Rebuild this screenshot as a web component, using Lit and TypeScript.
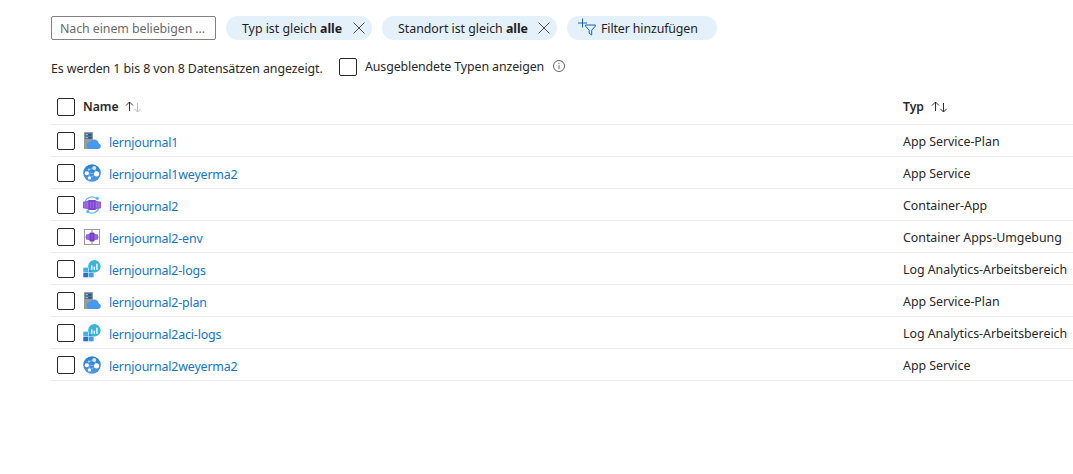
import { LitElement, html, svg, css } from "lit";
import { customElement, property } from "lit/decorators.js";

type Kind = "plan" | "web" | "container" | "env" | "logs";

interface Resource {
  name: string;
  type: string;
  kind: Kind;
}

const resources: Resource[] = [
  { name: "lernjournal1", type: "App Service-Plan", kind: "plan" },
  { name: "lernjournal1weyerma2", type: "App Service", kind: "web" },
  { name: "lernjournal2", type: "Container-App", kind: "container" },
  { name: "lernjournal2-env", type: "Container Apps-Umgebung", kind: "env" },
  { name: "lernjournal2-logs", type: "Log Analytics-Arbeitsbereich", kind: "logs" },
  { name: "lernjournal2-plan", type: "App Service-Plan", kind: "plan" },
  { name: "lernjournal2aci-logs", type: "Log Analytics-Arbeitsbereich", kind: "logs" },
  { name: "lernjournal2weyerma2", type: "App Service", kind: "web" },
];

const glyphs = {
  plan: svg`
    <path d="M1.8 0h7.4a.8.8 0 0 1 .8.8V17H1V.8a.8.8 0 0 1 .8-.8z" fill="#97999d"/>
    <path d="M2.3 1.6h6.6v2.2H2.3zM2.3 4.6h6.6v2.2H2.3z" fill="#1c5a8c"/>
    <path d="M2.9 2.1h1.8v1.2H2.9zM2.9 5.1h1.8v1.2H2.9z" fill="#7fd4f5"/>
    <path d="M7.3 17.1a3.4 3.4 0 0 1-.3-6.8 4.5 4.5 0 0 1 8.6 1 2.95 2.95 0 0 1-.4 5.8z" fill="#4499ec"/>`,
  web: svg`
    <defs><linearGradient id="w" x1="0" y1="0" x2="0" y2="1"><stop stop-color="#2a7fd0"/><stop offset="1" stop-color="#4d9ae6"/></linearGradient></defs>
    <circle cx="9" cy="9" r="8.8" fill="url(#w)"/>
    <path d="M5.5 6.2 11 3.8M5 7l1.6 6.5M11.5 4l2 6M7 13.7l6.5-3.5M4.5 9l9 .8" stroke="#8fc2f0" stroke-width=".8" fill="none"/>
    <circle cx="3.7" cy="9.3" r="2" fill="#fff"/>
    <circle cx="11.2" cy="3.9" r="2" fill="#cfe7fb"/>
    <circle cx="13.6" cy="9.8" r="2.6" fill="#fff"/>
    <circle cx="6.5" cy="13.9" r="1.7" fill="#fff"/>
    <circle cx="5.8" cy="5.5" r="1.1" fill="#b8daf7"/>`,
  container: svg`
    <path d="M2 6A7.5 7.5 0 0 1 13.5 2.4M16 12A7.5 7.5 0 0 1 4.5 15.6" fill="none" stroke="#55bfe0" stroke-width="1.1"/>
    <circle cx="14.3" cy="2.3" r="1.6" fill="#4fbddd"/>
    <circle cx="4.8" cy="15.6" r="1.6" fill="#4fbddd"/>
    <path d="M0 5.7 4 5l2-1h6l2 1 4 .7v6.6l-4 .7-2 1H6l-2-1-4-.7z" fill="#9560df"/>
    <path d="M5.5 4h7v10h-7z" fill="#7d48cd"/>
    <path d="M2.2 7v4M4.2 6.4v5.2M7.7 6v6M10.2 6v6M13.8 6.4v5.2M15.8 7v4" stroke="#a97fe9" stroke-width=".7"/>`,
  env: svg`
    <path d="M1.5 1.5h15v15h-15zM9 1.5v4M9 12.5v4M1.5 9H4M14 9h2.5" fill="#fff" stroke="#9b9b9b" stroke-width="1.1"/>
    <path d="m3 6.5 3-.5 1-1.3h4L12 6l3 .5v5l-3 .5-1 1.3H7L6 12l-3-.5z" fill="#945ddd"/>
    <path d="M6.8 4.7h4.4v8.6H6.8z" fill="#7440c2"/>
    <path d="M5 7v4M9 6.5v5M13 7v4" stroke="#a77be5" stroke-width=".6"/>`,
  logs: svg`
    <path d="M.3 7.6h4.9v4.6H.3z" fill="#4fabeb"/>
    <path d="M.3 12.7h4.9v4.6H.3z" fill="#2077c0"/>
    <path d="M5.7 12.7h4.9v4.6H5.7z" fill="#3f9be4"/>
    <path d="m5.5 12.3.7-4.5 4 4.5z" fill="#258fc3"/>
    <circle cx="11.4" cy="6.3" r="6.2" fill="#38b6d6"/>
    <path d="M8 5.5h1.4v4.3H8zM10.6 6.8H12v3h-1.4zM13.2 3.7h1.4v6.1h-1.4z" fill="#fff"/>`,
};

@customElement("resource-icon")
export class ResourceIcon extends LitElement {
  @property() kind: Kind = "plan";

  static styles = css`
    :host { display: block; width: 18px; height: 18px; }
    .glyph { display: block; width: 18px; height: 18px; }
  `;

  render() {
    return html`<svg class="glyph" viewBox="0 0 18 18">${glyphs[this.kind]}</svg>`;
  }
}

@customElement("check-box")
export class CheckBox extends LitElement {
  static styles = css`
    :host {
      display: block; box-sizing: border-box; flex: none;
      width: 18px; height: 18px;
      border: 1px solid #292827; border-radius: 2px; background: #fff;
    }
  `;

  render() {
    return html``;
  }
}

@customElement("app-root")
export class AppRoot extends LitElement {
  static styles = css`
    :host {
      display: block; box-sizing: border-box; height: 474px; overflow: hidden;
      padding: 16px 0 0 51px; background: #fff; color: #292827;
      font: 12.4px/18px "Noto Sans", "Open Sans", sans-serif;
      white-space: nowrap;
    }
    svg { display: block; flex: none; overflow: visible; fill: none; }
    .filters { display: flex; height: 24px; gap: 10px; }
    .search {
      box-sizing: border-box; width: 165px; padding: 3px 8px 0;
      border: 1px solid #838180; border-radius: 2px; color: #6c6a68;
      letter-spacing: -0.08px;
    }
    .pill {
      box-sizing: border-box; display: flex; align-items: center;
      border-radius: 12px; background: #e4f1fb; padding-left: 16px; color: #1f1e1d;
      letter-spacing: -0.03px;
    }
    .label { padding-top: 2px; }
    .type { width: 146px; }
    .place { width: 175px; }
    .add { width: 150px; padding-left: 11px; letter-spacing: -0.12px; }
    .close { margin: 0 6px 0 auto; }
    .funnel { margin-right: 5px; }
    .summary { display: flex; height: 49px; padding-top: 17px; box-sizing: border-box; }
    .count { width: 288px; padding-top: 3px; letter-spacing: -0.08px; }
    .summary check-box { margin-top: 1px; }
    .hidden-label { width: 180px; margin: 1px 8px 0; letter-spacing: -0.11px; }
    .info { margin-top: 3px; }
    .row {
      display: grid; grid-template-columns: 32px 26px 794px 1fr;
      box-sizing: border-box; height: 32px; align-items: center;
      border-bottom: 1px solid #edebe9;
    }
    .row check-box { margin-left: 6px; }
    .head { height: 36px; font-weight: 600; font-size: 12.2px; }
    .head .col-name { grid-column: 2 / 4; }
    .col { display: flex; align-items: center; }
    .arrows { margin-left: 7px; }
    .col-name .arrows { margin-left: 6px; }
    .name { color: #1674c1; padding-top: 4px; letter-spacing: -0.17px; }
    .kind { padding-top: 2px; letter-spacing: -0.03px; }
  `;

  private close() {
    return html`<svg class="close" width="14" height="14"><path d="m1.5 1.5 11 11m0-11-11 11" stroke="#4d4b49"/></svg>`;
  }

  private arrows(second: string) {
    return html`<svg class="arrows" width="16" height="12">
      <path d="M4.5 10V1M1 4.5 4.5 1 8 4.5" stroke="#323130"/>
      <path d="M12.5 2v9M9.3 7.8l3.2 3.2 3.2-3.2" stroke=${second}/>
    </svg>`;
  }

  render() {
    return html`
      <div class="filters">
        <div class="search">Nach einem beliebigen ...</div>
        <div class="pill type"><span class="label">Typ ist gleich <b>alle</b></span>${this.close()}</div>
        <div class="pill place"><span class="label">Standort ist gleich <b>alle</b></span>${this.close()}</div>
        <div class="pill add">
          <svg class="funnel" width="18" height="18">
            <path d="M4.5-.5v9M0 4h9" stroke="#1268b6"/>
            <path d="M7.5 6h9.8v1.2l-3.6 4V16l-2.5-1.7v-3.1L7.5 7.2z" stroke="#1268b6"/>
          </svg>
          <span class="label">Filter hinzufügen</span>
        </div>
      </div>
      <div class="summary">
        <span class="count">Es werden 1 bis 8 von 8 Datensätzen angezeigt.</span>
        <check-box></check-box>
        <span class="hidden-label">Ausgeblendete Typen anzeigen</span>
        <svg class="info" width="13" height="13">
          <circle cx="6" cy="6" r="5.5" stroke="#686664"/>
          <path d="M6 5.2v4M6 2.9v1.2" stroke="#686664"/>
        </svg>
      </div>
      <div class="row head">
        <check-box></check-box>
        <span class="col col-name">Name${this.arrows("#bdbbb9")}</span>
        <span class="col">Typ${this.arrows("#323130")}</span>
      </div>
      ${resources.map((r) => html`
        <div class="row">
          <check-box></check-box>
          <resource-icon .kind=${r.kind}></resource-icon>
          <span class="name">${r.name}</span>
          <span class="kind">${r.type}</span>
        </div>`)}
    `;
  }
}
